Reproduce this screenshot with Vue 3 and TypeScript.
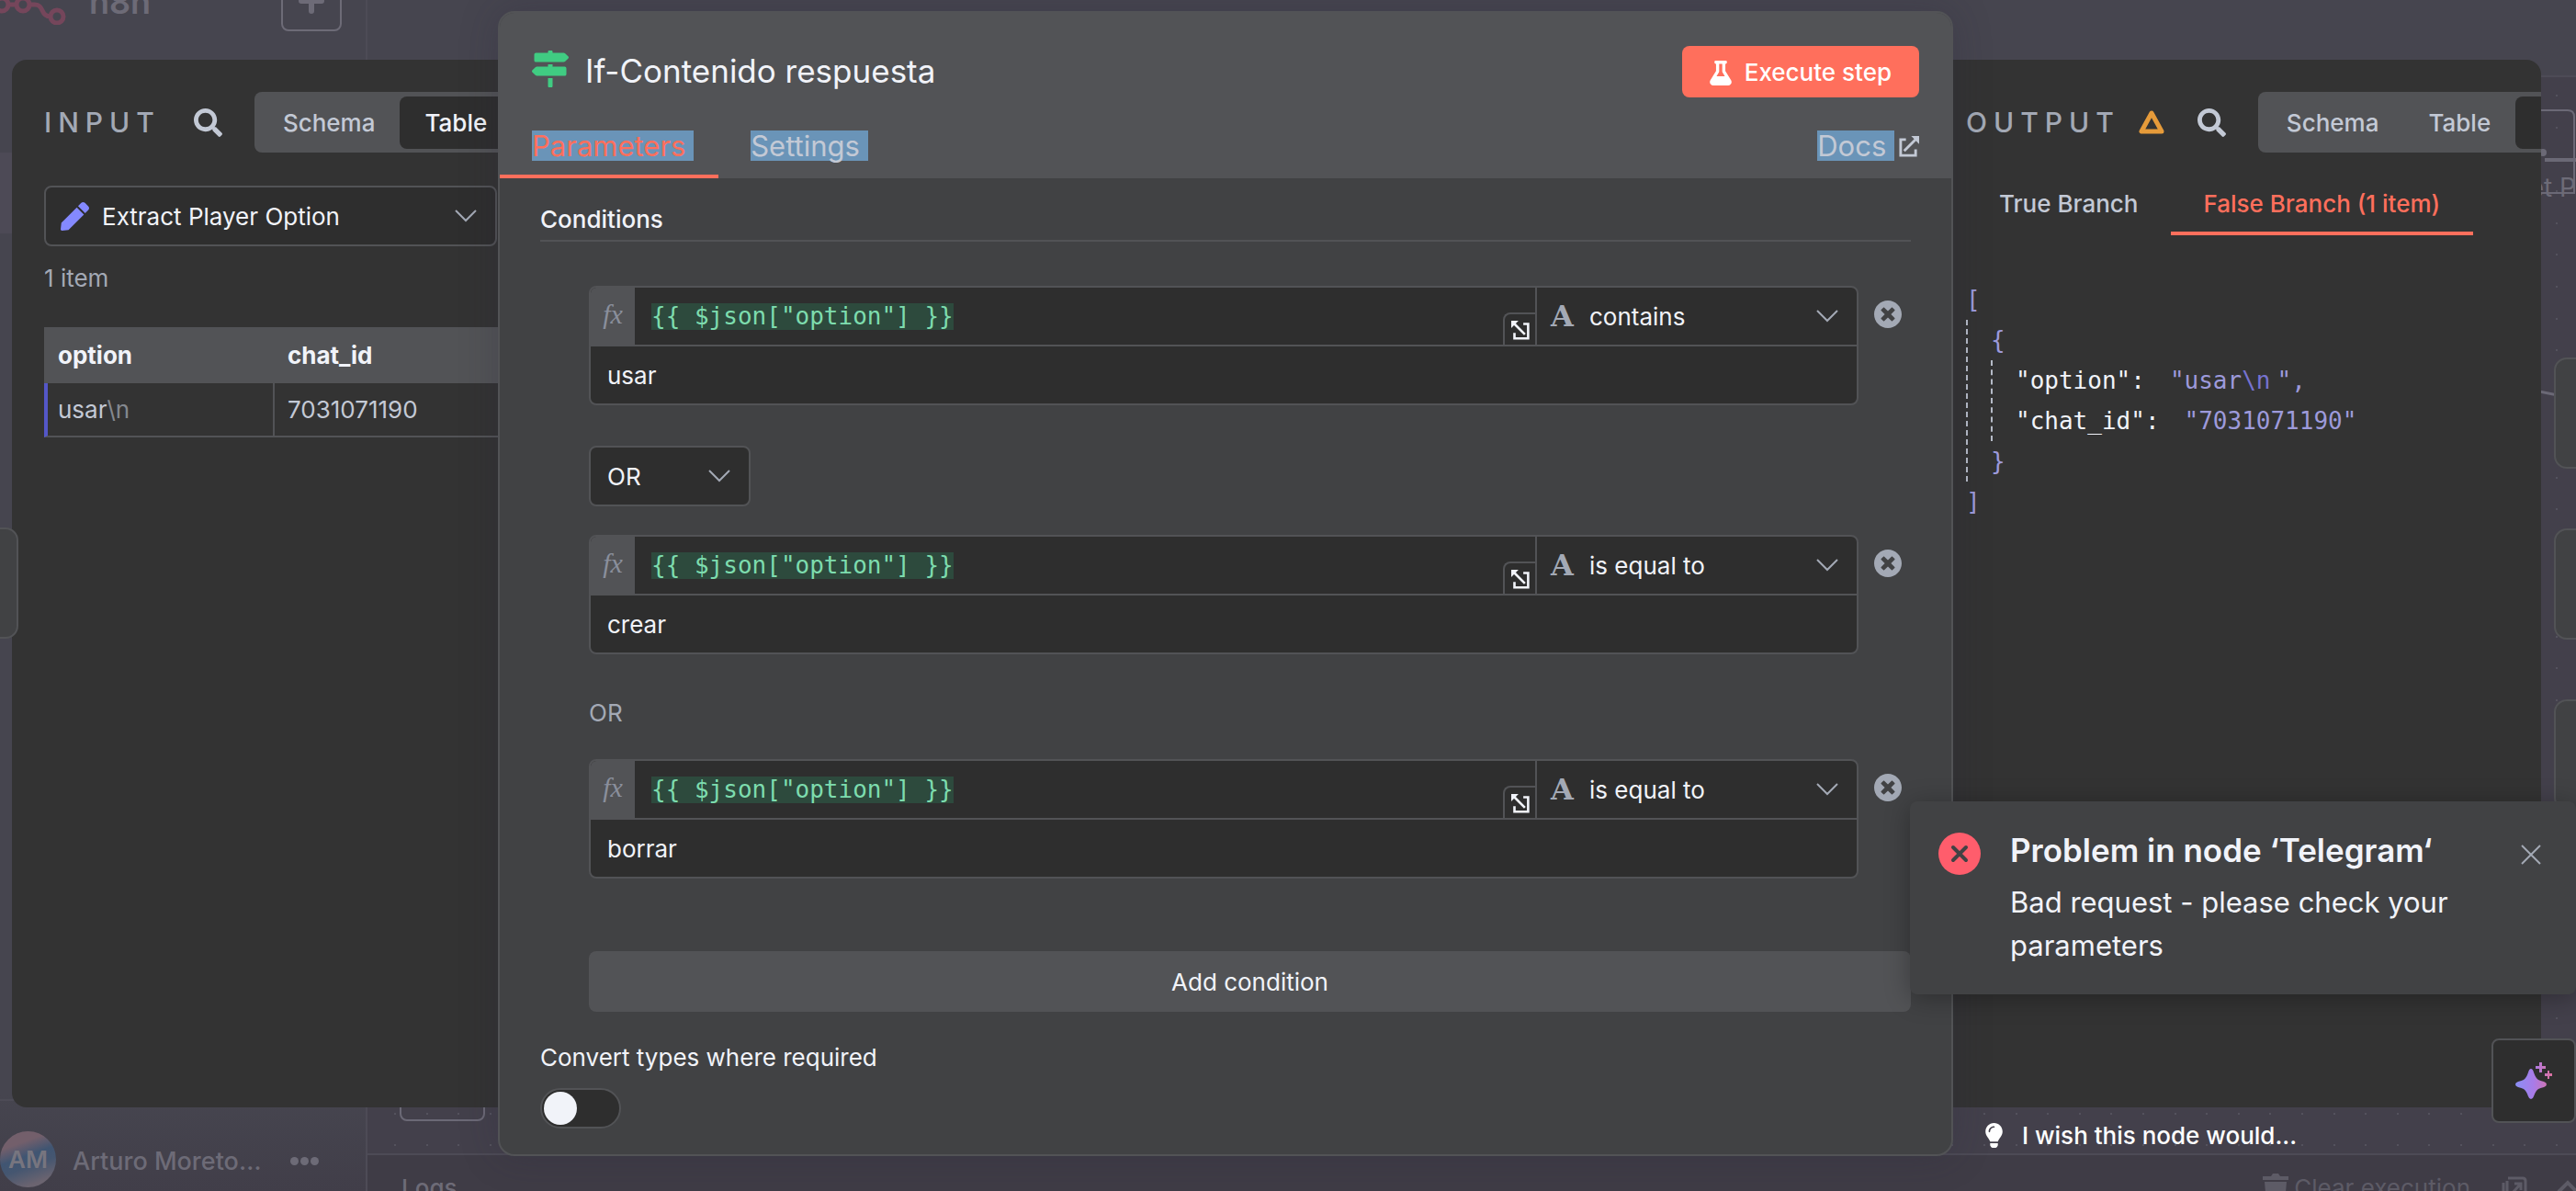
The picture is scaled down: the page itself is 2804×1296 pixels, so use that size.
<script setup lang="ts">
import { ref } from 'vue'

interface Condition {
  id: number
  expression: string
  operator: string
  value: string
}

const operators = ['contains', 'is equal to']
const conditions = ref<Condition[]>([
  { id: 1, expression: '{{ $json["option"] }}', operator: 'contains', value: 'usar' },
  { id: 2, expression: '{{ $json["option"] }}', operator: 'is equal to', value: 'crear' },
  { id: 3, expression: '{{ $json["option"] }}', operator: 'is equal to', value: 'borrar' },
])
const combinator = ref('OR')
const inputNode = ref('Extract Player Option')
const convertTypes = ref(false)

const dotSteps = [29, 64, 98, 133, 167]

const icons = {
  search:
    'M505 442.7L405.3 343c-4.5-4.5-10.6-7-17-7H372c27.6-35.3 44-79.7 44-128C416 93.1 322.9 0 208 0S0 93.1 0 208s93.1 208 208 208c48.3 0 92.7-16.4 128-44v16.3c0 6.4 2.5 12.5 7 17l99.7 99.7c9.4 9.4 24.6 9.4 33.9 0l28.3-28.3c9.4-9.4 9.4-24.6.1-34zM208 336c-70.7 0-128-57.2-128-128 0-70.7 57.2-128 128-128 70.7 0 128 57.2 128 128 0 70.7-57.2 128-128 128z',
  pen: 'M290.74 93.24l128.02 128.02-277.99 277.99-114.14 12.6C11.35 513.54-1.56 500.62.14 485.34l12.7-114.22 277.9-277.88zm207.2-19.06l-60.11-60.11c-18.75-18.75-49.16-18.75-67.91 0l-56.55 56.55 128.02 128.02 56.55-56.55c18.75-18.76 18.75-49.16 0-67.91z',
  signs:
    'M507.31 84.69L464 41.37c-6-6-14.14-9.37-22.63-9.37H288V16c0-8.84-7.16-16-16-16h-32c-8.84 0-16 7.16-16 16v16H56c-13.25 0-24 10.75-24 24v80c0 13.25 10.75 24 24 24h385.37c8.49 0 16.62-3.37 22.63-9.37l43.31-43.31c6.25-6.26 6.25-16.38 0-22.63zM224 496c0 8.84 7.16 16 16 16h32c8.84 0 16-7.16 16-16V384h-64v112zm232-272H288v-32h-64v32H70.63c-8.49 0-16.62 3.37-22.63 9.37L4.69 276.69c-6.25 6.25-6.25 16.38 0 22.63L48 342.63c6 6 14.14 9.37 22.63 9.37H456c13.25 0 24-10.75 24-24v-80c0-13.25-10.75-24-24-24z',
  flask:
    'M437.2 403.5L320 215V64h8c13.3 0 24-10.7 24-24V24c0-13.3-10.7-24-24-24H120c-13.3 0-24 10.7-24 24v16c0 13.3 10.7 24 24 24h8v151L10.8 403.5C-18.5 450.6 15.3 512 70.9 512h306.2c55.7 0 89.4-61.5 60.1-108.5zM137.9 320l48.2-77.6c3.7-5.2 5.8-11.6 5.8-18.4V64h64v160c0 6.9 2.2 13.2 5.8 18.4l48.2 77.6h-172z',
  timesCircle:
    'M256 8C119 8 8 119 8 256s111 248 248 248 248-111 248-248S393 8 256 8zm121.6 313.1c4.7 4.7 4.7 12.3 0 17L338 377.6c-4.7 4.7-12.3 4.7-17 0L256 312l-65.1 65.6c-4.7 4.7-12.3 4.7-17 0L134.4 338c-4.7-4.7-4.7-12.3 0-17l65.6-65-65.6-65.1c-4.7-4.7-4.7-12.3 0-17l39.6-39.6c4.7-4.7 12.3-4.7 17 0l65 65.7 65.1-65.6c4.7-4.7 12.3-4.7 17 0l39.6 39.6c4.7 4.7 4.7 12.3 0 17L312 256l65.6 65.1z',
  bulb: 'M96.06 454.35c.01 6.29 1.87 12.45 5.36 17.69l17.09 25.69a31.99 31.99 0 0 0 26.64 14.28h61.71a31.99 31.99 0 0 0 26.64-14.28l17.09-25.69a31.989 31.989 0 0 0 5.36-17.69l.04-38.35H96.01l.05 38.35zM0 176c0 44.37 16.45 84.85 43.56 115.78 16.52 18.85 42.36 58.23 52.21 91.45.04.26.07.52.11.78h160.24c.04-.26.07-.51.11-.78 9.85-33.22 35.69-72.6 52.21-91.45C335.55 260.85 352 220.37 352 176 352 78.61 272.91-.3 175.45 0 73.44.31 0 82.97 0 176zm176-80c-44.11 0-80 35.89-80 80 0 8.84-7.16 16-16 16s-16-7.16-16-16c0-61.76 50.24-112 112-112 8.84 0 16 7.16 16 16s-7.16 16-16 16z',
}

function removeCondition(id: number) {
  conditions.value = conditions.value.filter((c) => c.id !== id)
}
function addCondition() {
  conditions.value.push({ id: Date.now(), expression: '', operator: 'is equal to', value: '' })
}
</script>

<template>
  <div class="app">
    <!-- dimmed editor behind the node dialog -->
    <div class="editor">
      <aside class="sidebar">
        <div class="brand">
          <svg class="brand-logo" viewBox="0 0 72 40" aria-hidden="true">
            <g fill="none" stroke="#75465b" stroke-width="5">
              <circle cx="2" cy="18" r="7" />
              <circle cx="25" cy="18" r="7" />
              <circle cx="62" cy="31" r="7" />
              <path d="M9 18h9M32 18h6c10 0 6 13 17 13" />
            </g>
          </svg>
          <span class="brand-name">n8n</span>
          <button class="add-btn" type="button" aria-label="Create">
            <svg viewBox="0 0 28 28" aria-hidden="true"><path d="M14 3v22M3 14h22" stroke="#6d6b77" stroke-width="6" stroke-linecap="round" /></svg>
          </button>
        </div>
        <div class="nav-active"></div>
        <div class="user">
          <span class="avatar">AM</span>
          <span class="user-name">Arturo Moreto…</span>
          <span class="user-more"><i></i><i></i><i></i></span>
        </div>
      </aside>
      <div class="workspace">
        <div class="topbar"></div>
        <div class="canvas">
          <svg class="dots" aria-hidden="true">
            <defs>
              <pattern id="dot-grid" width="173" height="173" patternUnits="userSpaceOnUse" y="25">
                <template v-for="x in dotSteps" :key="x">
                  <rect v-for="y in dotSteps" :key="y" :x="x" :y="y" width="2" height="2" fill="#54525d" />
                </template>
              </pattern>
            </defs>
            <rect width="100%" height="100%" fill="url(#dot-grid)" />
          </svg>
          <svg class="cut-node" viewBox="0 0 40 100" aria-hidden="true">
            <g fill="none" stroke="#6b6976" stroke-width="2">
              <path d="M0 6h31q7 0 7 7v83H0" />
              <path d="M6 60h34" stroke-width="4" />
            </g>
            <circle cx="4" cy="52" r="4" fill="#6b6976" />
          </svg>
          <span class="cut-label">Get P</span>
          <svg class="wire" viewBox="0 0 20 10" aria-hidden="true"><path d="M0 2l20 4" stroke="#6b6976" stroke-width="3" /></svg>
          <div class="nodes"><div class="node"></div><div class="node"></div><div class="node"></div></div>
          <div class="cut-tool"></div>
        </div>
        <div class="logs">
          <span>Logs</span>
          <span class="logs-actions">
            <svg class="i-trash" viewBox="0 0 28 32" aria-hidden="true"><path d="M0 3h9l2-3h6l2 3h9v4H0zM2 9h24l-2 23H4z" fill="currentColor" /></svg>
            <span>Clear execution</span>
            <svg class="i-pop" viewBox="0 0 28 30" aria-hidden="true"><path d="M7 3h16q3 0 3 3v16q0 3-3 3H9q-3 0-3-3V6M2 8v20h18M12 19l8-9M14 9h7v7" fill="none" stroke="currentColor" stroke-width="3" /></svg>
            <svg class="i-up" viewBox="0 0 24 16" aria-hidden="true"><path d="M2 14l10-10 10 10" fill="none" stroke="currentColor" stroke-width="4" /></svg>
          </span>
        </div>
      </div>
    </div>

    <main class="ndv">
      <section class="side input">
        <div class="panel">
          <header class="panel-head">
            <h2>INPUT</h2>
            <button class="icon-btn" type="button" aria-label="Search input"><svg viewBox="0 0 512 512"><path :d="icons.search" /></svg></button>
            <div class="views">
              <button type="button">Schema</button>
              <button type="button" class="on">Table</button>
            </div>
          </header>
          <div class="select-wrap node-select">
            <svg class="i-pen" viewBox="0 0 512 512" aria-hidden="true"><path :d="icons.pen" /></svg>
            <select v-model="inputNode" aria-label="Input node"><option>Extract Player Option</option></select>
            <svg class="chev" viewBox="0 0 24 14" aria-hidden="true"><path d="M1 1l11 11L23 1" /></svg>
          </div>
          <p class="count">1 item</p>
          <table>
            <thead><tr><th>option</th><th>chat_id</th></tr></thead>
            <tbody><tr><td>usar<span class="esc">\n</span></td><td>7031071190</td></tr></tbody>
          </table>
        </div>
      </section>

      <section class="center">
        <header class="node-head">
          <div class="title-row">
            <svg class="i-signs" viewBox="0 0 512 512" aria-hidden="true"><path :d="icons.signs" /></svg>
            <h1>If-Contenido respuesta</h1>
            <button class="execute" type="button">
              <svg viewBox="0 0 448 512" aria-hidden="true"><path :d="icons.flask" /></svg>
              <span>Execute step</span>
            </button>
          </div>
          <nav class="tabs">
            <button type="button" class="tab active"><span class="hl">Parameters&nbsp;</span></button>
            <button type="button" class="tab"><span class="hl">Settings&nbsp;</span></button>
            <a href="#docs" class="docs">
              <span class="hl">Docs&nbsp;</span>
              <svg viewBox="0 0 24 24" aria-hidden="true">
                <path d="M9 4H3v18h17v-7M7 17L20 4" fill="none" stroke="currentColor" stroke-width="3" />
                <path d="M15 0h9v9z" fill="currentColor" />
              </svg>
            </a>
          </nav>
        </header>

        <div class="node-body">
          <h3>Conditions</h3>
          <div class="conditions">
            <template v-for="(c, i) in conditions" :key="c.id">
              <div v-if="i === 1" class="select-wrap combinator">
                <select v-model="combinator" aria-label="Combinator"><option>OR</option><option>AND</option></select>
                <svg class="chev" viewBox="0 0 24 14" aria-hidden="true"><path d="M1 1l11 11L23 1" /></svg>
              </div>
              <p v-if="i > 1" class="or-text">{{ combinator }}</p>
              <div class="condition">
                <div class="box">
                  <div class="line">
                    <span class="fx">fx</span>
                    <div class="expr">
                      <input v-model="c.expression" type="text" aria-label="Expression" spellcheck="false" />
                      <button class="expand" type="button" aria-label="Open editor">
                        <svg viewBox="0 0 24 24" aria-hidden="true">
                          <path d="M15 4h6v18H4v-7M17 17L4 4" fill="none" stroke="currentColor" stroke-width="3" />
                          <path d="M0 0h9L0 9z" fill="currentColor" />
                        </svg>
                      </button>
                    </div>
                    <div class="operator">
                      <span class="type" aria-hidden="true">A</span>
                      <select v-model="c.operator" aria-label="Operator"><option v-for="o in operators" :key="o">{{ o }}</option></select>
                      <svg class="chev" viewBox="0 0 24 14" aria-hidden="true"><path d="M1 1l11 11L23 1" /></svg>
                    </div>
                  </div>
                  <input v-model="c.value" class="value" type="text" aria-label="Value" spellcheck="false" />
                </div>
                <button class="remove" type="button" aria-label="Remove condition" @click="removeCondition(c.id)">
                  <svg viewBox="8 8 496 496" aria-hidden="true"><path :d="icons.timesCircle" /></svg>
                </button>
              </div>
            </template>
            <button class="add" type="button" @click="addCondition">Add condition</button>
          </div>
          <label class="convert" for="convert">Convert types where required</label>
          <input id="convert" v-model="convertTypes" class="switch" type="checkbox" role="switch" />
        </div>
      </section>

      <section class="side output">
        <div class="panel">
          <header class="panel-head">
            <h2>OUTPUT</h2>
            <svg class="i-warn" viewBox="0 0 28 26" aria-hidden="true"><path d="M14 3L3 23h22z" /></svg>
            <button class="icon-btn" type="button" aria-label="Search output"><svg viewBox="0 0 512 512"><path :d="icons.search" /></svg></button>
            <div class="views">
              <button type="button">Schema</button>
              <button type="button">Table</button>
              <button type="button" class="on json-view" aria-label="JSON"></button>
            </div>
          </header>
          <nav class="branches">
            <button type="button">True Branch</button>
            <button type="button" class="active">False Branch (1 item)</button>
          </nav>
          <div class="json">
            <div class="row">[</div>
            <div class="guide">
              <div class="row">{</div>
              <div class="guide">
                <div class="row"><span class="key">"option":</span><span>"usar<span class="nl">\n</span></span><span class="tail">",</span></div>
                <div class="row"><span class="key">"chat_id":</span><span>"7031071190"</span></div>
              </div>
              <div class="row">}</div>
            </div>
            <div class="row">]</div>
          </div>
        </div>
        <a href="#feedback" class="wish">
          <svg viewBox="0 0 352 512" aria-hidden="true"><path :d="icons.bulb" /></svg>
          <span>I wish this node would...</span>
        </a>
      </section>
    </main>

    <div class="prev-node"></div>

    <div class="toast" role="alert">
      <svg class="t-icon" viewBox="0 0 46 46" aria-hidden="true">
        <circle cx="23" cy="23" r="23" fill="#ff5d6c" />
        <path d="M16 16l14 14M30 16L16 30" stroke="#414244" stroke-width="4" stroke-linecap="round" />
      </svg>
      <div class="t-text">
        <h4>Problem in node ‘Telegram‘</h4>
        <p>Bad request - please check your parameters</p>
      </div>
      <button type="button" aria-label="Close">
        <svg viewBox="0 0 22 22" aria-hidden="true"><path d="M1 1l20 20M21 1L1 21" stroke="#a3a9b5" stroke-width="2" /></svg>
      </button>
    </div>

    <button class="assistant" type="button" aria-label="Ask assistant">
      <svg viewBox="0 0 40 40" aria-hidden="true">
        <defs>
          <linearGradient id="spark" x1="0" y1="0" x2="40" y2="0" gradientUnits="userSpaceOnUse">
            <stop offset="0" stop-color="#8a8ff5" />
            <stop offset="0.5" stop-color="#a97be8" />
            <stop offset="1" stop-color="#dc719f" />
          </linearGradient>
        </defs>
        <g fill="url(#spark)">
          <path d="M17 7q2 0 3 4 2 6 5 8 2 1 6 2 3 1 3 3t-3 3q-4 1-6 2-3 2-5 8-1 3-3 3t-3-3q-2-6-5-8-2-1-6-2-3-1-3-3t3-3q4-1 6-2 3-2 5-8 1-4 3-4z" />
          <path d="M26 0h3v4h4v3h-4v4h-3V7h-4V4h4z" />
          <path d="M35 9h2v3h3v3h-3v3h-2v-3h-3v-3h3z" />
        </g>
      </svg>
    </button>
  </div>
</template>

<style>
body {
  background: #43404b;
}
</style>

<style scoped>
* {
  box-sizing: border-box;
}
.app {
  position: relative;
  min-height: 100vh;
  overflow: hidden;
  font-family: Inter, 'Liberation Sans', sans-serif;
  font-size: 26px;
  line-height: 32px;
  color: #f1f3f9;
}
button,
input,
select {
  font: inherit;
  color: inherit;
  border: 0;
  margin: 0;
  padding: 0;
  background: none;
  outline: none;
  appearance: none;
}
h1, h2, h3, h4, p {
  margin: 0;
  font-weight: 400;
}
svg {
  display: block;
  flex: none;
}
a {
  color: inherit;
  text-decoration: none;
}

/* editor background */
.editor {
  position: absolute;
  inset: 0;
  display: flex;
  color: #6d6b77;
}
.sidebar {
  flex: none;
  width: 400px;
  display: flex;
  flex-direction: column;
  background: linear-gradient(#46454f 92%, #413e49);
  border-right: 2px solid #4d4b56;
}
.brand {
  display: flex;
  align-items: flex-end;
  height: 34px;
  flex: none;
}
.brand-logo {
  width: 72px;
  height: 40px;
  margin-bottom: 7px;
}
.brand-name {
  margin: 0 142px 16px 25px;
  font-size: 36px;
  font-weight: 600;
}
.add-btn {
  display: flex;
  justify-content: center;
  align-items: center;
  flex: none;
  width: 66px;
  height: 66px;
  border: 2px solid #6d6b77;
  border-radius: 8px;
}
.add-btn svg {
  width: 28px;
  height: 28px;
}
.nav-active {
  height: 88px;
  margin-top: 132px;
  background: #4d4a56;
}
.user {
  display: flex;
  align-items: center;
  height: 100px;
  margin-top: auto;
  border-top: 2px solid #4d4b56;
  padding-top: 28px;
}
.avatar {
  width: 61px;
  height: 61px;
  border-radius: 50%;
  text-align: center;
  line-height: 61px;
  font-weight: 600;
  color: #77757f;
  background: linear-gradient(160deg, #735f6b 25%, #405572 45%, #455670 60%, #6b6470 85%);
}
.user-name {
  margin-left: 18px;
  padding-top: 6px;
  width: 219px;
  font-size: 27px;
  font-weight: 500;
}
.user-more {
  display: flex;
  gap: 2px;
  margin-left: 18px;
  padding-top: 4px;
}
.user-more i {
  width: 9px;
  height: 9px;
  border-radius: 50%;
  background: #6d6b77;
}
.workspace {
  flex: 1;
  display: flex;
  flex-direction: column;
  min-width: 0;
  background: #43404b;
}
.topbar {
  height: 84px;
  background: #46454f;
  border-bottom: 2px solid #4d4b56;
}
.canvas {
  position: relative;
  flex: 1;
}
.dots {
  position: absolute;
  inset: 0;
  width: 100%;
  height: 100%;
}
.nodes {
  position: absolute;
  top: 305px;
  right: -96px;
  display: flex;
  flex-direction: column;
  gap: 65px;
}
.node {
  width: 120px;
  height: 121px;
  border: 2px solid #525356;
  border-radius: 14px;
  background: #414244;
}
.cut-node {
  position: absolute;
  top: 30px;
  right: 0;
  width: 40px;
  height: 100px;
}
.cut-label {
  position: absolute;
  top: 104px;
  right: 0;
  font-size: 28px;
  white-space: nowrap;
}
.wire {
  position: absolute;
  top: 340px;
  right: 20px;
  width: 20px;
  height: 10px;
}
.cut-tool {
  position: absolute;
  left: 35px;
  bottom: 35px;
  width: 93px;
  height: 66px;
  border: 2px solid #6b6976;
  border-radius: 8px;
}
.logs {
  display: flex;
  justify-content: space-between;
  height: 41px;
  padding: 20px 0 0 37px;
  overflow: hidden;
  border-top: 2px solid #4d4b56;
  background: #3f3c46;
  font-weight: 500;
}
.logs-actions {
  display: flex;
  font-weight: 400;
  color: #5d5b66;
}
.i-trash {
  width: 28px;
  height: 32px;
  margin-right: 6px;
}
.i-pop {
  width: 28px;
  height: 30px;
  margin: 2px 32px 0 34px;
}
.i-up {
  width: 24px;
  height: 16px;
  margin: 6px -3px 0 0;
}

/* node detail view */
.ndv {
  position: relative;
  display: flex;
  padding: 12px 38px 38px 13px;
}
.side {
  display: flex;
  flex-direction: column;
  flex: none;
  padding-top: 53px;
}
.side.input {
  width: 529px;
  padding-bottom: 53px;
}
.side.output {
  width: 640px;
}
.panel {
  flex: 1;
  overflow: hidden;
  background: #333333;
}
.input .panel {
  padding: 35px 0 0 35px;
  border-radius: 16px 0 0 16px;
}
.output .panel {
  padding: 35px 0 0 14px;
  border-radius: 0 16px 16px 0;
}
.panel-head {
  display: flex;
  align-items: center;
  height: 66px;
}
h2 {
  font-size: 30px;
  font-weight: 500;
  letter-spacing: 7px;
  color: #a3a9b5;
}
.icon-btn {
  flex: none;
  width: 31px;
  height: 31px;
  margin: 0 35px 0 36px;
}
.icon-btn svg {
  width: 31px;
  height: 31px;
  fill: #c3c9d5;
}
.i-warn {
  width: 28px;
  height: 26px;
  margin-left: 20px;
  fill: none;
  stroke: #e69b3a;
  stroke-width: 5;
  stroke-linejoin: round;
}
.views {
  display: flex;
  flex: none;
  height: 66px;
  padding: 5px 4px;
  border-radius: 8px;
  background: #525356;
  color: #c3c9d5;
}
.views button {
  height: 57px;
  padding: 0 27px;
  border-radius: 8px;
  font-weight: 500;
}
.views .on {
  background: #2e2e2e;
  color: #f1f3f9;
}
.views .json-view {
  width: 120px;
}
.select-wrap {
  position: relative;
  display: flex;
  align-items: center;
  height: 66px;
  border: 2px solid #525356;
  border-radius: 8px;
  background: #2e2e2e;
}
.select-wrap select {
  flex: 1;
  height: 100%;
  padding-top: 2px;
}
.chev {
  position: absolute;
  right: 20px;
  top: 50%;
  width: 24px;
  height: 14px;
  margin-top: -7px;
  fill: none;
  stroke: #a3a9b5;
  stroke-width: 2;
  pointer-events: none;
}
.node-select {
  margin: 36px 1px 0 0;
}
.i-pen {
  width: 31px;
  height: 31px;
  margin: 0 14px 0 16px;
  fill: #8489ff;
}
.count {
  margin-top: 19px;
  color: #a3a9b5;
}
table {
  width: 520px;
  margin-top: 37px;
  border-collapse: separate;
  border-spacing: 0;
  table-layout: fixed;
}
th {
  height: 61px;
  padding: 0 14px 0 15px;
  text-align: left;
  font-weight: 700;
  background: #525356;
}
td {
  height: 59px;
  padding: 0 14px;
  color: #c3c9d5;
  border-bottom: 2px solid #525356;
}
th:first-child {
  width: 251px;
}
th + th {
  padding-left: 14px;
}
td:first-child {
  padding-left: 11px;
  border-left: 4px solid #5457c8;
  border-right: 2px solid #525356;
}
.esc {
  color: #84888f;
}

/* centre column */
.center {
  position: relative;
  z-index: 1;
  flex: 1;
  min-width: 0;
  border: 2px solid #525356;
  border-radius: 18px;
  background: #414244;
  box-shadow: 0 0 40px rgba(40, 36, 60, 0.25);
}
.node-head {
  padding-top: 36px;
  background: #525356;
  border-radius: 16px 16px 0 0;
}
.title-row {
  display: flex;
  align-items: center;
  height: 56px;
  padding: 0 35px;
}
.i-signs {
  width: 40px;
  height: 40px;
  margin-bottom: 6px;
  fill: #40cc82;
}
h1 {
  flex: 1;
  margin: 0 0 2px 18px;
  font-size: 35px;
  line-height: 44px;
}
.execute {
  display: flex;
  align-items: center;
  gap: 14px;
  height: 56px;
  padding: 2px 30px 0;
  border-radius: 8px;
  background: #ff6f5c;
  color: #ffffff;
  font-weight: 500;
}
.execute svg {
  width: 24px;
  height: 27px;
  fill: #ffffff;
}
.tabs {
  display: flex;
  height: 88px;
  color: #c3c9d5;
  font-size: 31px;
}
.tab {
  height: 88px;
  padding: 36px 27px 15px 35px;
  border-bottom: 4px solid transparent;
}
.tab.active {
  color: #ff6f5c;
  border-color: #ff6f5c;
}
.hl {
  display: block;
  line-height: 33px;
  background: #6a94b8;
}
.docs {
  display: flex;
  align-items: flex-start;
  gap: 4px;
  margin-left: auto;
  padding: 36px 35px 0 0;
}
.docs svg {
  width: 23px;
  height: 23px;
  margin-top: 6px;
}
.node-body {
  padding: 28px 44px;
}
h3 {
  padding: 1px 0 6px;
  border-bottom: 2px solid #525356;
  font-size: 26px;
  font-weight: 500;
}
.conditions {
  margin: 48px 0 0 53px;
}
.condition {
  display: flex;
  align-items: flex-start;
  gap: 17px;
  padding-right: 10px;
}
.box {
  flex: 1;
  min-width: 0;
  height: 130px;
  overflow: hidden;
  border: 2px solid #525356;
  border-radius: 8px;
  background: #2e2e2e;
}
.line {
  display: flex;
  height: 64px;
  border-bottom: 2px solid #525356;
}
.fx {
  width: 48px;
  background: #525356;
  color: #8a8f9c;
  text-align: center;
  font: italic 30px/58px 'Liberation Serif', serif;
}
.expr {
  position: relative;
  flex: 1;
  display: flex;
  align-items: center;
  padding-left: 18px;
}
.expr input {
  width: 21ch;
  height: 29px;
  background: #2d4a3d;
  color: #7ddcae;
  font-family: 'DejaVu Sans Mono', monospace;
}
.expand {
  position: absolute;
  right: 0;
  bottom: 0;
  width: 35px;
  height: 35px;
  padding: 6px 5px 5px 7px;
  border: 2px solid #525356;
  border-width: 2px 0 0 2px;
  border-radius: 8px 0 0 0;
}
.expand svg {
  width: 21px;
  height: 21px;
}
.operator {
  position: relative;
  display: flex;
  align-items: center;
  width: 350px;
  border-left: 2px solid #525356;
}
.type {
  width: 57px;
  padding-left: 15px;
  color: #a3a9b5;
  font: bold 32px/60px 'DejaVu Serif', serif;
}
.operator select {
  flex: 1;
  height: 100%;
  padding-top: 2px;
}
.value {
  display: block;
  width: 100%;
  height: 62px;
  padding-left: 18px;
}
.remove {
  width: 30px;
  height: 30px;
  margin-top: 16px;
}
.remove svg {
  width: 30px;
  height: 30px;
  fill: #a3a9b5;
}
.combinator {
  width: 176px;
  margin: 44px 0 31px;
  padding-left: 18px;
}
.or-text {
  margin: 48px 0 34px;
  color: #a3a9b5;
}
.add {
  display: block;
  width: 100%;
  height: 66px;
  margin-top: 79px;
  padding-top: 2px;
  border-radius: 8px;
  background: #525356;
}
.convert {
  display: block;
  margin: 34px 0 17px;
}
.switch {
  display: block;
  width: 88px;
  height: 44px;
  padding: 2px;
  border: 2px solid #525356;
  border-radius: 22px;
  background: #2e2e2e;
}
.switch::before {
  content: '';
  display: block;
  width: 36px;
  height: 36px;
  border-radius: 50%;
  background: #f1f3f9;
}
.switch:checked::before {
  margin-left: auto;
}

/* output column */
.branches {
  display: flex;
  margin-left: 1px;
}
.branches button {
  height: 90px;
  padding: 25px 36px 0 35px;
  border-bottom: 4px solid transparent;
  color: #c3c9d5;
  font-weight: 500;
}
.branches .active {
  color: #ff6f5c;
  border-color: #ff6f5c;
}
.json {
  margin-top: 48px;
  color: #9d9adb;
  font-family: 'DejaVu Sans Mono', monospace;
  line-height: 44px;
}
.row {
  display: flex;
  height: 44px;
}
.key {
  margin-right: 27px;
  color: #f1f3f9;
}
.nl {
  color: #7672cf;
}
.tail {
  margin-left: 7px;
}
.guide {
  padding-left: 25px;
  border-left: 2px dashed #b6bcc8;
}
.wish {
  display: flex;
  align-items: center;
  height: 53px;
  padding: 8px 0 0 35px;
  gap: 21px;
  color: #ffffff;
  font-weight: 500;
}
.wish svg {
  width: 19px;
  height: 27px;
  fill: #ffffff;
}

/* floating items */
.prev-node {
  position: absolute;
  top: 574px;
  left: -100px;
  width: 120px;
  height: 121px;
  border: 2px solid #525356;
  border-radius: 14px;
  background: #414244;
}
.toast {
  position: absolute;
  z-index: 2;
  right: 0;
  bottom: 214px;
  display: flex;
  align-items: flex-start;
  width: 725px;
  padding: 31px 38px 30px 31px;
  border-radius: 8px;
  background: #414244;
  box-shadow: 0 4px 28px rgba(0, 0, 0, 0.3);
}
.t-icon {
  width: 46px;
  height: 46px;
  margin-top: 3px;
}
.t-text {
  flex: 1;
  margin-left: 32px;
  padding-right: 60px;
}
h4 {
  font-size: 35px;
  line-height: 44px;
  font-weight: 600;
}
.t-text p {
  margin-top: 11px;
  font-size: 31px;
  line-height: 47px;
}
.toast button {
  margin-top: 16px;
}
.toast button svg {
  width: 22px;
  height: 22px;
}
.assistant {
  position: absolute;
  z-index: 2;
  right: 0;
  bottom: 74px;
  display: flex;
  align-items: center;
  justify-content: center;
  width: 92px;
  height: 92px;
  border: 2px solid #525356;
  border-radius: 8px;
  background: #2e2e2e;
}
.assistant svg {
  width: 40px;
  height: 40px;
}
</style>
